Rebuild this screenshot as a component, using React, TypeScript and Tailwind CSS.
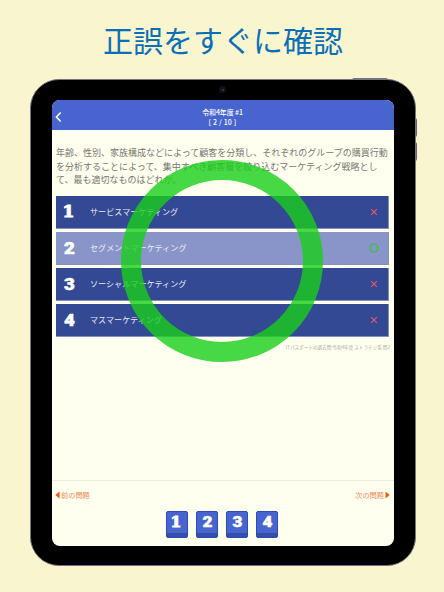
const jp = "font-['Noto_Sans_CJK_JP',sans-serif]";

const options = [
  { label: "サービスマーケティング", correct: false },
  { label: "セグメントマーケティング", correct: true },
  { label: "ソーシャルマーケティング", correct: false },
  { label: "マスマーケティング", correct: false },
];

const question = [
  "年齢、性別、家族構成などによって顧客を分類し、それぞれのグループの購買行動",
  "を分析することによって、集中すべき顧客層を絞り込むマーケティング戦略とし",
  "て、最も適切なものはどれか。",
];

function Digit({ n }: { n: number }) {
  return n === 1 ? (
    <span className="block -translate-x-px -translate-y-px font-['DejaVu_Serif',serif] font-bold leading-none [-webkit-text-stroke:1px_white]">1</span>
  ) : (
    <span className="block scale-x-110 font-['Roboto',sans-serif] font-black leading-none [-webkit-text-stroke:0.5px_white]">{n}</span>
  );
}

function Mark({ correct }: { correct: boolean }) {
  return (
    <svg viewBox="0 0 10 10" className="size-[10px] shrink-0" fill="none">
      {correct ? (
        <circle cx="5" cy="5" r="4" stroke="#1fce20" strokeWidth="1.1" />
      ) : (
        <path d="M2.2 2.2 7.8 7.8M7.8 2.2 2.2 7.8" stroke="#ef5368" strokeWidth="1.15" />
      )}
    </svg>
  );
}

function Option({ n, label, correct }: { n: number; label: string; correct: boolean }) {
  return (
    <div
      className={`flex h-[33px] items-center border-b border-r border-[#8790bd] pl-[6px] pr-[9px] text-white ${
        correct ? "bg-[#8995c9]" : "bg-[#334994]"
      }`}
    >
      <span className="w-[15px] text-center text-[17px]">
        <Digit n={n} />
      </span>
      <span className="ml-[13px] grow whitespace-nowrap text-[8.1px] leading-none text-[#e9ebf6]">{label}</span>
      <Mark correct={correct} />
    </div>
  );
}

function Key({ n }: { n: number }) {
  return (
    <div className="flex h-[27px] w-[22.5px] flex-col overflow-hidden rounded-[2px] border border-[#2b4bbd] bg-[#4865cf]">
      <div className="flex h-[21px] items-center justify-center text-[15.5px] text-white">
        <Digit n={n} />
      </div>
      <div className="h-[4px] bg-[#334fa8]" />
    </div>
  );
}

export default function App() {
  return (
    <main className={`relative h-[592px] w-[444px] overflow-hidden bg-[#f9f6cf] ${jp}`}>
      <h1 className="h-[79px] whitespace-nowrap pl-[2px] pt-[19px] text-center text-[30px] leading-[40px] text-[#0b6fb8]">
        正誤をすぐに確認
      </h1>

      <div className="absolute left-[352px] top-[78px] h-[2px] w-[36px] rounded-t bg-[#77757c]" />
      <div className="absolute left-[415px] top-[118px] h-[19px] w-[2px] rounded-r bg-[#66627a]" />
      <div className="absolute left-[415px] top-[142px] h-[19px] w-[2px] rounded-r bg-[#66627a]" />

      <div className="relative ml-[30px] h-[487px] w-[386px] rounded-[29px] border-[1.5px] border-[#73727e] bg-black px-[21px] pt-[20px]">
        <div className="absolute left-[188px] top-[6px] flex size-[7px] items-center justify-center rounded-full bg-[#10121b]">
          <span className="size-[2px] rounded-full bg-[#253e78]" />
        </div>

        <div className="flex h-[446px] w-[342px] flex-col overflow-hidden rounded-[8px] bg-[#fffff0]">
          <header className="grid h-[30px] shrink-0 grid-cols-[20px_1fr_20px] items-center bg-[#4865cf] text-white">
            <svg viewBox="0 0 10 12" className="ml-[2px] mt-[4px] h-[12px] w-[10px]" fill="none">
              <path d="M6.7 1.6 2.4 6l4.3 4.4" stroke="white" strokeWidth="1.5" />
            </svg>
            <div className="pr-px pt-[5px] text-center text-[7px] font-medium leading-[9.5px]">
              <div className="tracking-[-0.1px]">令和4年度 #1</div>
              <div className="tracking-[0.2px]">[ 2 / 10 ]</div>
            </div>
          </header>

          <p className="ml-[4px] mt-[16px] h-[50px] whitespace-nowrap text-[9px] leading-[13.67px] text-[#77776f]">
            {question.map((line) => (
              <span key={line} className="block">{line}</span>
            ))}
          </p>

          <div className="ml-[4px] flex w-[333px] flex-col gap-[3px]">
            {options.map((o, i) => (
              <Option key={o.label} n={i + 1} {...o} />
            ))}
          </div>
          <div className="mr-[4px] mt-[5px] whitespace-nowrap text-right text-[4.6px] leading-[10px] text-[#aaa99f]">
            ITパスポートの過去問 令和4年度 ストラテジ系 問2
          </div>

          <footer className="mt-auto h-[66px] border-t border-[#ecebdd]">
            <div className="flex items-center justify-between pl-[3px] pr-[4px] pt-[8px] text-[7.2px] leading-[12px] text-[#f18a55]">
              <span className="flex items-center">
                <svg viewBox="0 0 5 8" className="mr-px h-[8px] w-[5px]"><path d="M4.5.5v7L.3 4z" fill="#ef5b0c" /></svg>
                前の問題
              </span>
              <span className="flex items-center">
                次の問題
                <svg viewBox="0 0 5 8" className="ml-px h-[8px] w-[5px]"><path d="M.5.5v7L4.7 4z" fill="#ef5b0c" /></svg>
              </span>
            </div>
            <div className="mt-[10px] flex justify-center gap-[7.5px] pr-[2px]">
              {[1, 2, 3, 4].map((n) => <Key key={n} n={n} />)}
            </div>
          </footer>
        </div>
      </div>

      <div className="absolute left-[121px] top-[160px] size-[202px] rounded-full border-[20px] border-[#19ce1a]/80" />
    </main>
  );
}
